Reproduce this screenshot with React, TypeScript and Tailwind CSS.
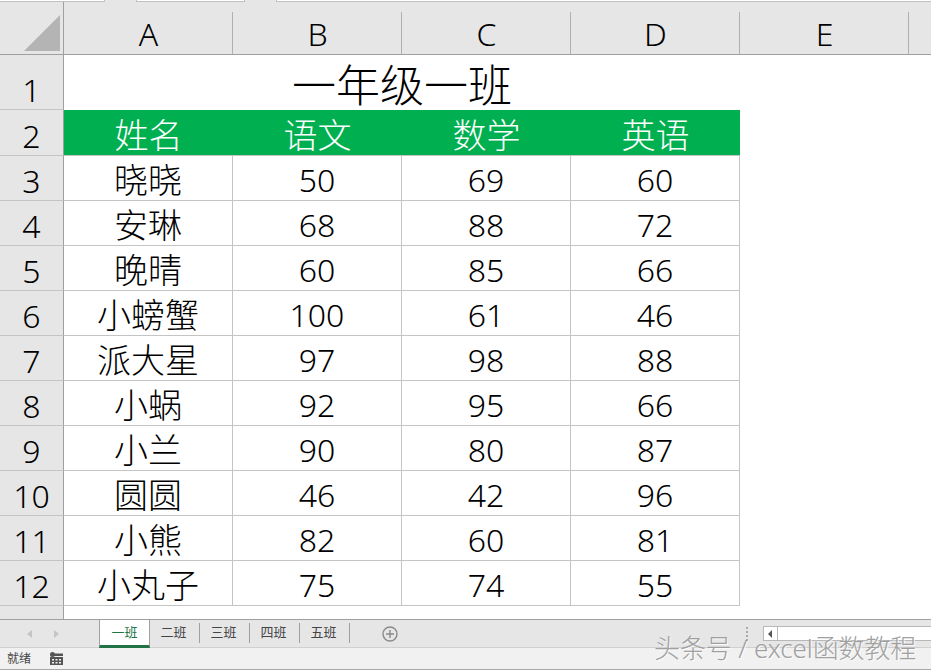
const rows: [string, string, string, string][] = [
  ["晓晓", "50", "69", "60"],
  ["安琳", "68", "88", "72"],
  ["晚晴", "60", "85", "66"],
  ["小螃蟹", "100", "61", "46"],
  ["派大星", "97", "98", "88"],
  ["小蜗", "92", "95", "66"],
  ["小兰", "90", "80", "87"],
  ["圆圆", "46", "42", "96"],
  ["小熊", "82", "60", "81"],
  ["小丸子", "75", "74", "55"],
];
const font = "font-['Noto_Sans','Noto_Sans_CJK_SC',sans-serif]";
const colHead = ["A", "B", "C", "D", "E"];
const tabs = ["二班", "三班", "四班", "五班"];

function RowNum({ n, h }: { n: string; h: string }) {
  return (
    <div className={`${h} w-[64px] shrink-0 bg-[#e6e6e6] border-r border-r-[#9f9f9f] border-b border-b-[#c4c4c4] flex items-end justify-center text-[32px] leading-[38px] font-light text-black`}>
      {n}
    </div>
  );
}

export default function App() {
  return (
    <div className={`${font} relative w-[931px] h-[670px] overflow-hidden bg-white flex flex-col`}>
      <div className="h-[2px] shrink-0 flex bg-[#e6e6e6] gap-[31px]">
        <div className="w-[105px] bg-white border-b border-r border-[#c0c0c0]" />
        <div className="w-[109px] bg-white border-b border-x border-[#c0c0c0]" />
        <div className="flex-1 bg-white border-b border-l border-[#c0c0c0]" />
      </div>
      <div className="h-[53px] shrink-0 flex bg-[#e6e6e6] border-b border-b-[#9f9f9f]">
        <div className="w-[64px] shrink-0 border-r border-r-[#9f9f9f] flex items-end justify-end pr-[3px] pb-[3px]">
          <svg width="36" height="36" viewBox="0 0 36 36"><polygon points="36,0 36,36 0,36" fill="#b4b4b4" /></svg>
        </div>
        {colHead.map((c) => (
          <div key={c} className="relative w-[169px] shrink-0 flex items-end justify-center text-[32px] leading-[40px] font-light text-black">
            {c}
            <span className="absolute right-0 top-[10px] bottom-0 w-[1px] bg-[#b0b0b0]" />
          </div>
        ))}
      </div>

      <div className="flex">
        <RowNum n="1" h="h-[55px]" />
        <div className="w-[676px] h-[55px] flex items-end justify-center text-[44px] leading-[44px] pb-[3px] text-black font-light">一年级一班</div>
      </div>
      <div className="flex">
        <RowNum n="2" h="h-[46px]" />
        <div className="w-[676px] h-[46px] grid grid-cols-4 bg-[#00b050] border-b border-b-[#c4c4c4] text-white text-[34px] leading-[40px] font-light">
          {["姓名", "语文", "数学", "英语"].map((t) => (
            <div key={t} className="flex items-center justify-center pt-[4px]">{t}</div>
          ))}
        </div>
      </div>
      {rows.map((r, i) => (
        <div key={r[0]} className="flex">
          <RowNum n={String(i + 3)} h="h-[45px]" />
          <div className="w-[676px] grid grid-cols-4">
            {r.map((c, j) => (
              <div key={j} className={`h-[45px] flex items-center justify-center pt-[3px] border-r border-b border-[#c4c4c4] leading-[40px] font-light text-black ${j === 0 ? "text-[34px]" : "text-[32px]"}`}>{c}</div>
            ))}
          </div>
        </div>
      ))}
      <div className="h-[13px] shrink-0 flex">
        <div className="w-[64px] bg-[#e6e6e6] border-r border-r-[#9f9f9f]" />
      </div>

      <div className="h-[29px] shrink-0 flex items-stretch bg-[#e6e6e6] border-t border-t-[#a0a0a0] border-b border-b-[#d0d0d0] relative">
        <div className="w-[99px] shrink-0 flex items-center justify-center gap-[21px] pr-[12px]">
          <svg width="6" height="8" viewBox="0 0 6 8"><polygon points="5,0 5,8 0,4" fill="#c4c4c4" /></svg>
          <svg width="6" height="8" viewBox="0 0 6 8"><polygon points="0,0 0,8 5,4" fill="#c4c4c4" /></svg>
        </div>
        <div className="relative -top-[1px] h-[25px] w-[49px] shrink-0 bg-white border-l border-r border-t border-[#a0a0a0] border-b-[3px] border-b-[#217346] flex items-center justify-center text-[13px] text-[#217346] box-content">一班</div>
        {tabs.map((t) => (
          <div key={t} className="h-[20px] mt-[3px] w-[50px] shrink-0 border-r border-r-[#a0a0a0] flex items-center justify-center pr-[2px] text-[13px] text-[#444]">{t}</div>
        ))}
        <div className="ml-[32px] h-[27px] flex items-center">
          <svg width="16" height="16" viewBox="0 0 16 16" fill="none" stroke="#8a8a8a" strokeWidth="1.4">
            <circle cx="8" cy="8" r="7" />
            <path d="M8 4v8M4 8h8" />
          </svg>
        </div>
        <div className="absolute left-[746px] top-[7px] h-[14px] w-[2px] border-l-2 border-dotted border-l-[#aaa]" />
        <div className="absolute left-[763px] top-[6px] -right-[2px] h-[15px] flex bg-white border border-[#b8b8b8]">
          <div className="w-[14px] border-r border-r-[#b8b8b8] flex items-center justify-center">
            <svg width="5" height="8" viewBox="0 0 5 8"><polygon points="4,0 4,8 0,4" fill="#555" /></svg>
          </div>
        </div>
      </div>

      <div className="h-[22px] shrink-0 flex items-center bg-[#f1f1f1] border-b border-b-[#a8a8a8] text-[12px] text-[#444] pl-[7px]">
        <span>就绪</span>
        <svg className="ml-[19px]" width="13" height="13" viewBox="0 0 13 13" fill="#555">
          <circle cx="2.5" cy="2.5" r="2.5" />
          <rect x="2" y="1.5" width="11" height="2.5" />
          <path d="M0 5h13v8H0z M2 7v1.4h2V7z M5.5 7v1.4h2V7z M9 7v1.4h2V7z M2 10v1.4h2V10z M5.5 10v1.4h2V10z M9 10v1.4h2V10z" fillRule="evenodd" />
        </svg>
      </div>

      <div className="absolute left-[654px] top-[631px] text-[26px] leading-[34px] tracking-[-0.1px] font-light text-[#a0a0a0] [text-shadow:1px_1px_0_rgba(255,255,255,0.8)] whitespace-nowrap">
        头条号 / excel函数教程
      </div>
    </div>
  );
}
